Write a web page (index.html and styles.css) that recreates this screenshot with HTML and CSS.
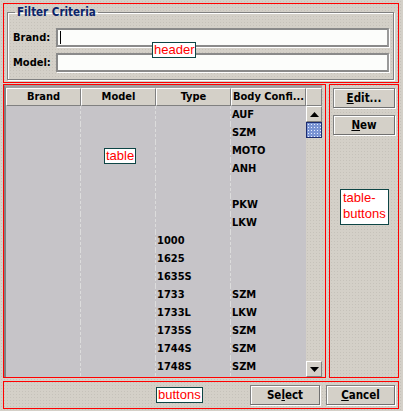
FILE: index.html
```html
<!DOCTYPE html>
<html>
<head>
<meta charset="utf-8">
<link rel="stylesheet" href="styles.css">
</head>
<body>
<div class="page">
  <div class="zone header">
    <fieldset class="criteria">
      <legend>Filter Criteria</legend>
      <div class="field"><label>Brand:</label><div class="input"><span class="caret"></span></div></div>
      <div class="field"><label>Model:</label><div class="input"></div></div>
    </fieldset>
    <span class="tag tag-header">header</span>
  </div>
  <div class="main">
    <div class="zone table-zone">
      <div class="grid-frame">
        <div class="grid">
          <div class="head">
            <div class="th">Brand</div>
            <div class="th">Model</div>
            <div class="th">Type</div>
            <div class="th">Body Confi...</div>
            <div class="corner"></div>
          </div>
          <div class="body">
            <div class="rows">
              <div class="row"><span></span><span></span><span></span><span>AUF</span></div>
              <div class="row"><span></span><span></span><span></span><span>SZM</span></div>
              <div class="row"><span></span><span></span><span></span><span>MOTO</span></div>
              <div class="row"><span></span><span></span><span></span><span>ANH</span></div>
              <div class="row"><span></span><span></span><span></span><span></span></div>
              <div class="row"><span></span><span></span><span></span><span>PKW</span></div>
              <div class="row"><span></span><span></span><span></span><span>LKW</span></div>
              <div class="row"><span></span><span></span><span>1000</span><span></span></div>
              <div class="row"><span></span><span></span><span>1625</span><span></span></div>
              <div class="row"><span></span><span></span><span>1635S</span><span></span></div>
              <div class="row"><span></span><span></span><span>1733</span><span>SZM</span></div>
              <div class="row"><span></span><span></span><span>1733L</span><span>LKW</span></div>
              <div class="row"><span></span><span></span><span>1735S</span><span>SZM</span></div>
              <div class="row"><span></span><span></span><span>1744S</span><span>SZM</span></div>
              <div class="row"><span></span><span></span><span>1748S</span><span>SZM</span></div>
            </div>
            <div class="scrollbar">
              <div class="sbtn"><svg width="9" height="5" viewBox="0 0 9 5"><path d="M4.5 0 L9 5 L0 5 Z" fill="#000"/></svg></div>
              <div class="thumb"></div>
              <div class="track"></div>
              <div class="sbtn"><svg width="9" height="5" viewBox="0 0 9 5"><path d="M0 0 L9 0 L4.5 5 Z" fill="#000"/></svg></div>
            </div>
          </div>
        </div>
      </div>
      <span class="tag tag-table">table</span>
    </div>
    <div class="zone side">
      <div class="btn side-btn"><u>E</u>dit...</div>
      <div class="btn side-btn"><u>N</u>ew</div>
      <span class="tag tag-side">table-<br>buttons</span>
    </div>
  </div>
  <div class="zone footer">
    <span class="tag tag-footer">buttons</span>
    <div class="btn foot-btn">Se<u>l</u>ect</div>
    <div class="btn foot-btn cancel"><u>C</u>ancel</div>
  </div>
</div>
</body>
</html>
```

FILE: styles.css
```css
* { box-sizing: border-box; }
html, body { margin: 0; padding: 0; }
body {
  width: 403px;
  height: 411px;
  overflow: hidden;
  background-color: #d4d0c8;
  background-image: radial-gradient(circle, #c6c2ba 0.7px, transparent 0.9px);
  background-size: 3px 3px;
  font-family: "DejaVu Sans Condensed", "DejaVu Sans", sans-serif;
  font-size: 11px;
  font-weight: bold;
  color: #000;
}
.page {
  display: flex;
  flex-direction: column;
  padding: 3px 4px 0 3px;
  gap: 1px;
}
.zone {
  border: 1px solid #ff0000;
  position: relative;
}
.header {
  height: 80px;
  padding: 0 4px 0 3px;
}
.criteria {
  margin: 2px 0 0 0;
  padding: 9px 4px 0 5px;
  border: 1px solid #808080;
  box-shadow: inset 1px 1px 0 #fff, 1px 1px 0 #fff;
  height: 74px;
  display: flex;
  flex-direction: column;
  gap: 6px;
}
.criteria legend {
  color: #0a246a;
  padding: 0 2px 0 2px;
  margin-left: 2px;
  line-height: 13px;
  font-size: 11.5px;
}
.field {
  display: flex;
  align-items: center;
  height: 19px;
}
.field label {
  width: 43px;
  flex: none;
}
.input {
  flex: 1;
  height: 19px;
  background: #fcfdfb;
  border: 2px solid #8a8a8a;
  border-right-color: #9a9a9a;
  box-shadow: 1px 1px 0 #fff;
  position: relative;
}
.caret {
  position: absolute;
  left: 2px;
  top: 1px;
  width: 1px;
  height: 13px;
  background: #000;
}
.main {
  display: flex;
  gap: 3px;
  height: 294px;
  margin-top: 0;
}
.table-zone {
  width: 323px;
  padding: 0 3px 0 0;
}
.grid-frame {
  height: 100%;
  border-left: 2px solid #808080;
  border-top: 3px solid #a0a0a0;
  box-shadow: inset 1px 1px 0 #404040;
}
.grid {
  display: flex;
  flex-direction: column;
  height: 100%;
}
.head {
  display: grid;
  grid-template-columns: 75px 75px 75px 75px 16px;
  height: 18px;
  flex: none;
}
.th, .corner {
  background: #d4d0c8;
  border-top: 1px solid #fff;
  border-left: 1px solid #fff;
  border-right: 1px solid #808080;
  border-bottom: 1px solid #808080;
  text-align: center;
  line-height: 16px;
  white-space: nowrap;
  overflow: hidden;
}
.th:last-of-type { text-align: left; padding-left: 3px; }
.body {
  flex: 1;
  display: flex;
  min-height: 0;
}
.rows {
  width: 300px;
  background: #c6c4c8;
  display: flex;
  flex-direction: column;
}
.row {
  display: grid;
  grid-template-columns: 75px 75px 75px 75px;
  height: 18px;
  line-height: 18px;
}
.row span {
  padding-left: 1px;
  border-right: 1px dashed #dcdcdc;
  white-space: nowrap;
}
.row span:last-child { border-right: none; }
.scrollbar {
  width: 16px;
  display: flex;
  flex-direction: column;
}
.sbtn {
  height: 16px;
  background: #d4d0c8;
  border-top: 1px solid #fff;
  border-left: 1px solid #fff;
  border-right: 1px solid #808080;
  border-bottom: 1px solid #808080;
  display: flex;
  align-items: center;
  justify-content: center;
}
.thumb {
  height: 16px;
  background-color: #7a94d4;
  background-image: radial-gradient(circle, #e8eeff 0.7px, transparent 0.9px);
  background-size: 3px 3px;
  border: 1px solid #1c2c70;
}
.track { flex: 1; }
.side {
  width: 70px;
  padding: 3px 3px 0 3px;
  display: flex;
  flex-direction: column;
  gap: 7px;
}
.btn {
  background: #d4d0c8;
  border: 1px solid #808080;
  border-right-color: #707070;
  border-bottom-color: #707070;
  box-shadow: inset 1px 1px 0 #fff, 1px 1px 0 #fff;
  height: 20px;
  line-height: 18px;
  text-align: center;
  font-size: 11.5px;
}
.side-btn { width: 62px; }
.footer {
  height: 28px;
  margin-top: 2px;
  display: flex;
  align-items: center;
  justify-content: flex-end;
  padding-right: 3px;
  gap: 6px;
}
.foot-btn { width: 70px; }
.cancel { width: 69px; }
.tag {
  position: absolute;
  background: #fff;
  border: 1px solid #0d4545;
  color: #ff0000;
  font-family: "Liberation Sans", Arial, sans-serif;
  font-weight: normal;
  font-size: 13px;
  line-height: 14px;
  padding: 0 1px;
  white-space: nowrap;
}
.tag-header { left: 148px; top: 38px; }
.tag-table { left: 100px; top: 63px; }
.tag-side { left: 10px; top: 104px; padding: 0 2px 2px 2px; line-height: 16px; }
.tag-footer { left: 152px; top: 5px; }
```
